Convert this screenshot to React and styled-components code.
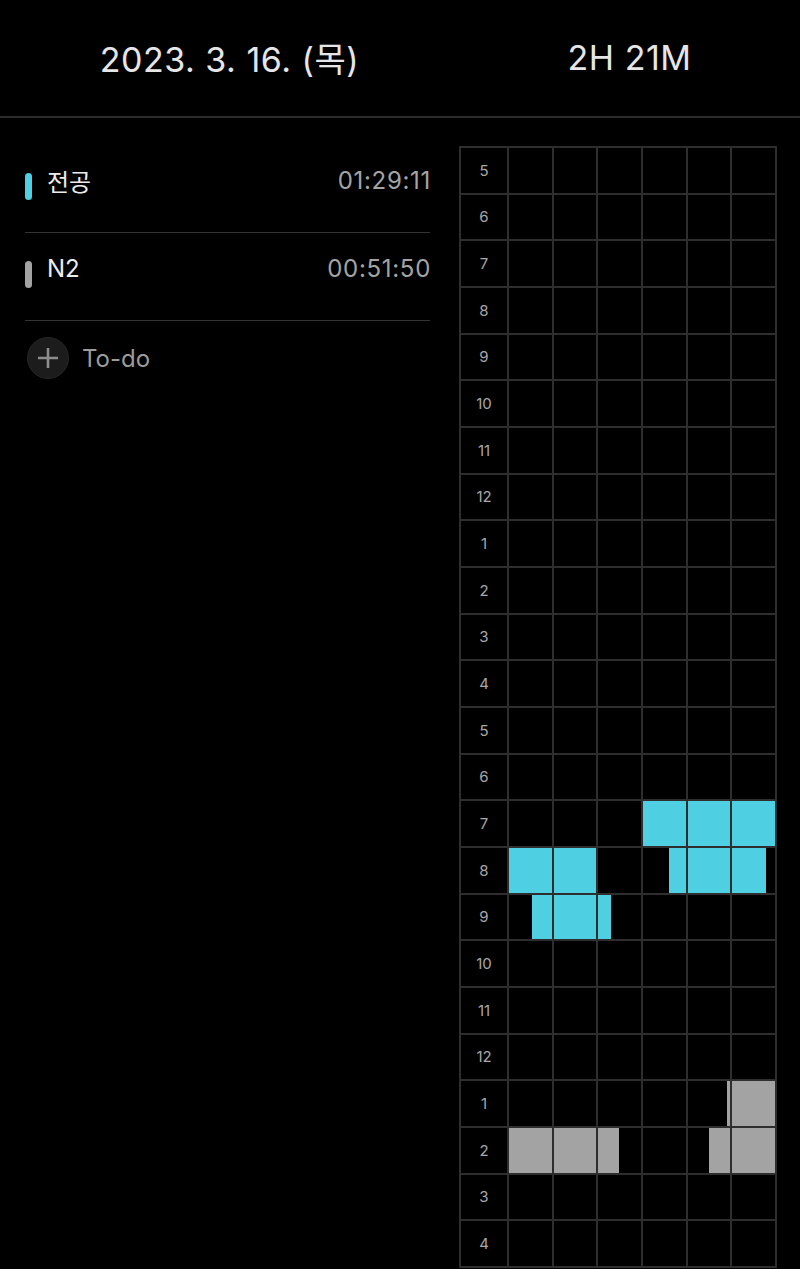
import React from "react";
import styled, { createGlobalStyle } from "styled-components";

const CYAN = "#4ecfe2";
const GRAY = "#a3a3a3";

const subjects = [
  { name: "전공", time: "01:29:11", color: CYAN },
  { name: "N2", time: "00:51:50", color: GRAY },
];

// 5 AM through 4 AM next day
const hours = [5, 6, 7, 8, 9, 10, 11, 12, 1, 2, 3, 4, 5, 6, 7, 8, 9, 10, 11, 12, 1, 2, 3, 4];

// study sessions keyed by row index, minutes within the hour
const sessions = {
  14: [[30, 60, CYAN]],
  15: [
    [0, 20, CYAN],
    [36, 58, CYAN],
  ],
  16: [[5.5, 23, CYAN]],
  20: [[49.2, 60, GRAY]],
  21: [
    [0, 24.8, GRAY],
    [45, 60, GRAY],
  ],
};

const GlobalStyle = createGlobalStyle`
  body {
    margin: 0;
    background: #000;
    font-family: Inter, "Noto Sans CJK KR", sans-serif;
    -webkit-font-smoothing: antialiased;
  }
`;

export default function App() {
  return (
    <>
      <GlobalStyle />
      <Page>
        <Header>
          <HeaderText>2023. 3. 16. (목)</HeaderText>
          <HeaderText>2H 21M</HeaderText>
        </Header>
        <Body>
          <List>
            {subjects.map((s) => (
              <SubjectRow key={s.name}>
                <ColorBar $color={s.color} />
                <SubjectName>{s.name}</SubjectName>
                <SubjectTime>{s.time}</SubjectTime>
              </SubjectRow>
            ))}
            <TodoRow>
              <AddButton>
                <svg width="24" height="24" viewBox="0 0 24 24">
                  <path d="M12 2v20M2 12h20" stroke="#8c8c8c" strokeWidth="2.6" />
                </svg>
              </AddButton>
              <TodoLabel>To-do</TodoLabel>
            </TodoRow>
          </List>
          <TimetableWrap>
            <Timetable>
              {hours.map((h, row) => (
                <React.Fragment key={row}>
                  <HourCell>{h}</HourCell>
                  {[0, 1, 2, 3, 4, 5].map((col) => {
                    const c0 = col * 10;
                    const c1 = c0 + 10;
                    return (
                      <Cell key={col}>
                        {(sessions[row] || []).map(([s, e, color], i) => {
                          const a = Math.max(s, c0);
                          const b = Math.min(e, c1);
                          if (b <= a) return null;
                          return (
                            <Fill
                              key={i}
                              $color={color}
                              style={{
                                left: `${((a - c0) / 10) * 100}%`,
                                width: `${((b - a) / 10) * 100}%`,
                              }}
                            />
                          );
                        })}
                      </Cell>
                    );
                  })}
                </React.Fragment>
              ))}
            </Timetable>
          </TimetableWrap>
        </Body>
      </Page>
    </>
  );
}

const Page = styled.div`
  width: 800px;
  background: #000;
`;

const Header = styled.header`
  display: grid;
  grid-template-columns: 459px 1fr;
  align-items: center;
  height: 116px;
  border-bottom: 2px solid #2c2c2c;
`;

const HeaderText = styled.div`
  text-align: center;
  color: #e6e6e6;
  font-size: 34px;
  letter-spacing: 0.5px;
  padding-bottom: 1px;
`;

const Body = styled.div`
  display: grid;
  grid-template-columns: 459px 1fr;
`;

const List = styled.div`
  padding: 27px 29px 0 25px;
`;

const SubjectRow = styled.div`
  display: flex;
  align-items: center;
  padding-bottom: 16px;
  box-sizing: border-box;
  height: 88px;
  border-bottom: 1.5px solid #343434;
`;

const ColorBar = styled.span`
  width: 7px;
  height: 27px;
  margin-top: 11px;
  border-radius: 4px;
  background: ${(p) => p.$color};
`;

const SubjectName = styled.span`
  margin-left: 15px;
  flex: 1;
  color: #ececec;
  font-size: 24px;
`;

const SubjectTime = styled.span`
  color: #a4a4a4;
  font-size: 24px;
  letter-spacing: 0.7px;
  margin-right: -1px;
`;

const TodoRow = styled.div`
  display: flex;
  align-items: center;
  gap: 13px;
  padding-top: 16px;
`;

const AddButton = styled.div`
  width: 42px;
  height: 42px;
  margin-left: 2px;
  border-radius: 50%;
  background: #1c1c1c;
  border: 1px solid #262626;
  box-sizing: border-box;
  display: flex;
  align-items: center;
  justify-content: center;
`;

const TodoLabel = styled.span`
  color: #9c9c9c;
  font-size: 24px;
`;

const TimetableWrap = styled.div`
  padding-top: 28px;
`;

const Timetable = styled.div`
  display: grid;
  grid-template-columns: 46px repeat(6, 1fr);
  grid-template-rows: repeat(24, 1fr);
  gap: 2px;
  padding: 2px;
  width: 318px;
  height: 1122px;
  box-sizing: border-box;
  background: #2e2e2e;
`;

const HourCell = styled.div`
  background: #000;
  display: flex;
  align-items: center;
  justify-content: center;
  color: #a8a8a8;
  font-size: 15px;
`;

const Cell = styled.div`
  position: relative;
  background: #000;
`;

const Fill = styled.div`
  position: absolute;
  top: 0;
  bottom: 0;
  background: ${(p) => p.$color};
`;
